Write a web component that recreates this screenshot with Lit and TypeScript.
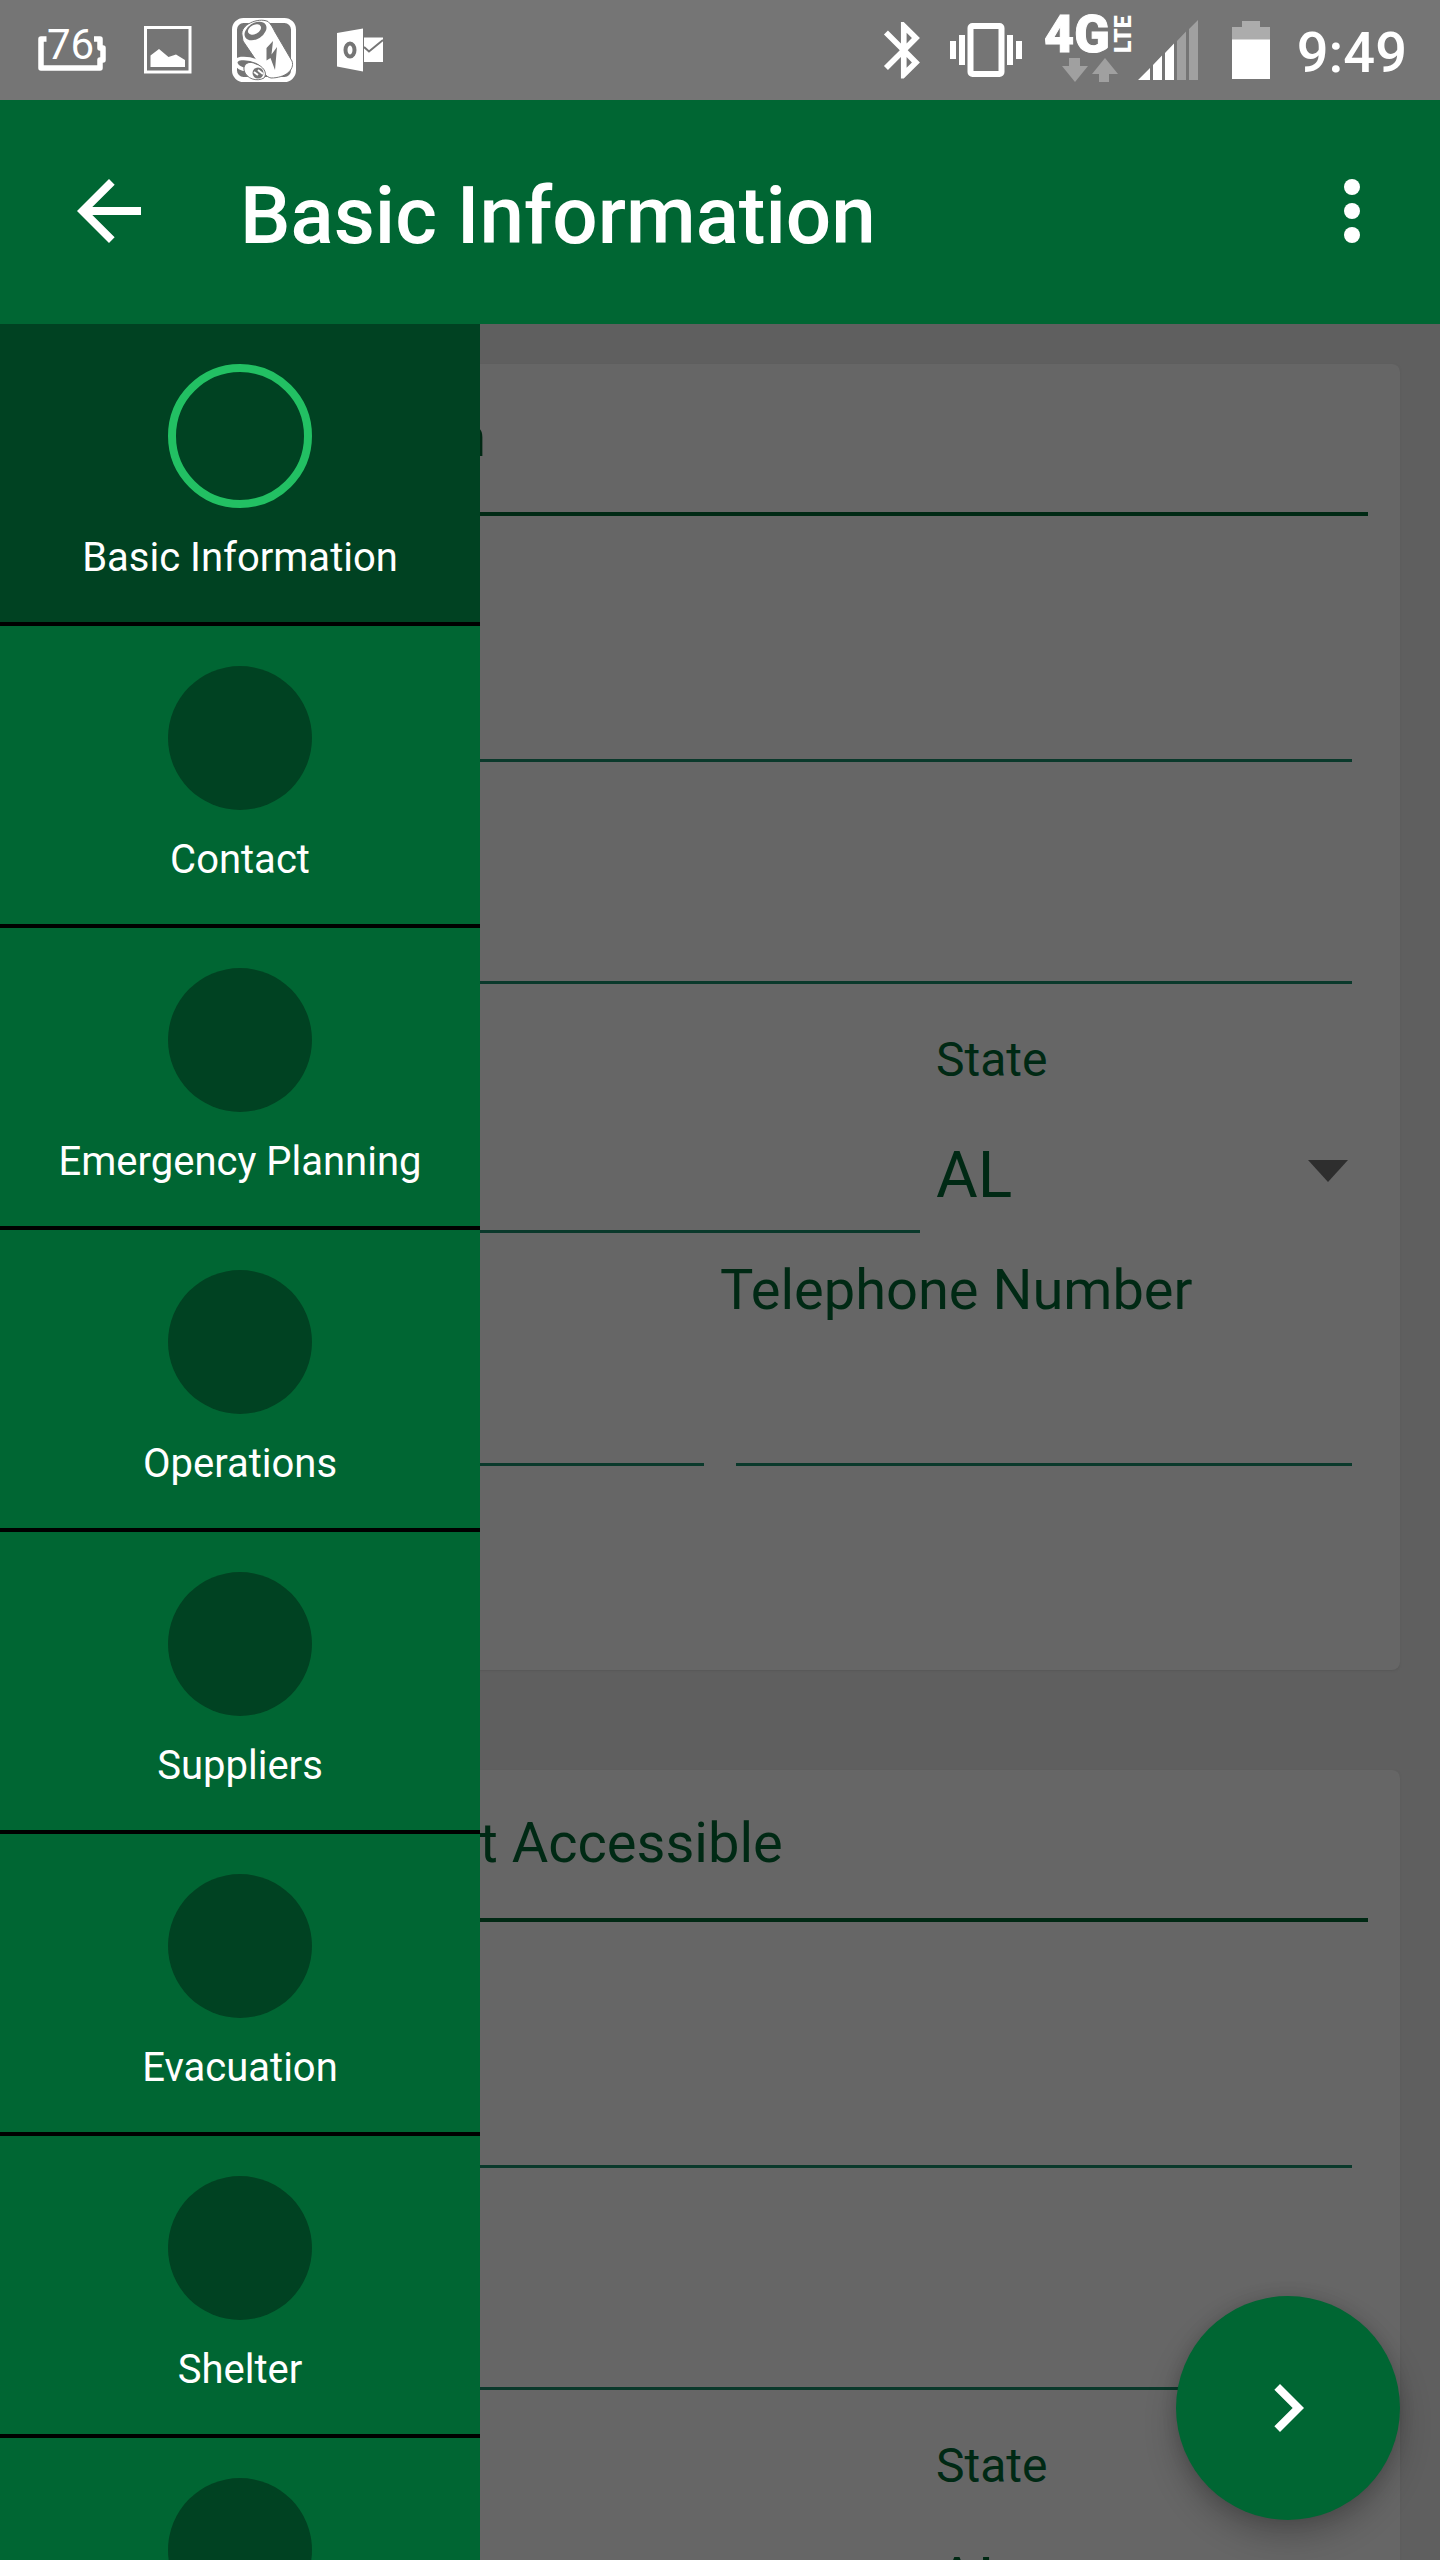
import { LitElement, html, css, svg } from "lit";
import { customElement, property, state } from "lit/decorators.js";
import { classMap } from "lit/directives/class-map.js";

@customElement("status-bar")
class StatusBar extends LitElement {
  static styles = css`
    :host {
      display: flex;
      justify-content: space-between;
      align-items: center;
      height: 100px;
      padding: 0 33px 0 36px;
      background: #757575;
      color: #fff;
    }
    .group {
      display: flex;
      align-items: center;
    }
    .notices {
      gap: 32px;
    }
    .system {
      gap: 20px;
    }
    svg {
      display: block;
      height: 100px;
      flex: none;
    }
    .dim {
      fill: #a0a0a0;
    }
    .level {
      font: 400 42px Roboto, sans-serif;
    }
    .network {
      font: 900 52px Roboto, sans-serif;
    }
    .network-small {
      font: 900 23px Roboto, sans-serif;
    }
    .time {
      font-size: 56px;
      line-height: 64px;
      font-weight: 500;
      padding-top: 6px;
    }
  `;

  render() {
    return html`
      <div class="group notices">
        <svg width="74" viewBox="36 0 74 100" aria-label="Battery level">
          <path d="M46.500 39H41V68H100V60H103V48H100V39H94" fill="none" stroke="#fff" stroke-width="5.500" stroke-linejoin="round" />
          <text class="level" x="47" y="59" fill="#fff">76</text>
        </svg>
        <svg width="58" viewBox="142 0 58 100" aria-hidden="true">
          <rect x="145.500" y="27.500" width="44.500" height="44.500" fill="none" stroke="#fff" stroke-width="3" />
          <path fill="#fff" d="M150.500 67V55.500L159 49L168.500 57L176 54.500L185 60V67Z" />
        </svg>
        <svg width="68" viewBox="232 0 68 100" aria-hidden="true">
          <rect x="234.500" y="20.500" width="59" height="59" rx="9" fill="none" stroke="#fff" stroke-width="5" />
          <path fill="#fff" stroke="#757575" stroke-width="1" d="M242 35C240 25 258 17 268 21.500C271 24 273 28 275 32L292 61C295 70 285 78 271 78C266 77 263 72 260 66L243 41Z" />
          <ellipse cx="255.500" cy="31" rx="12" ry="8" transform="rotate(-33 255.500 31)" fill="#757575" />
          <ellipse cx="254.500" cy="29.500" rx="7" ry="4.500" transform="rotate(-28 254.500 29.500)" fill="#fff" />
          <path fill="#757575" d="M273 41L266.500 48V60.500L270.500 58L275 70L277 47L271.500 54.500Z" />
          <path fill="none" stroke="#fff" stroke-width="3.500" d="M247 70C235 68 232 60 241 58.500C247 58 255 59 262 65" />
          <path fill="#fff" stroke="#757575" stroke-width="1" d="M244 70C243 64 249 60 256 64C263 66 268 73 264 78C257 82 246 79 244 70Z" />
          <circle cx="258" cy="73" r="5.500" fill="#757575" />
          <path stroke="#fff" stroke-width="2" fill="none" d="M254 72L258 75M258 70L263 74" />
        </svg>
        <svg width="52" viewBox="332 0 52 100" aria-hidden="true">
          <path fill="#fff" d="M337 33L363 28.500V71.500L337 66.500Z" />
          <ellipse cx="350" cy="50" rx="4.500" ry="6.500" fill="none" stroke="#757575" stroke-width="4" />
          <rect x="364" y="37.500" width="19" height="24.500" fill="#fff" />
          <path d="M364 47L369 51.500L383 40" fill="none" stroke="#757575" stroke-width="2" />
        </svg>
      </div>
      <div class="group system">
        <svg width="44" viewBox="880 0 44 100" aria-label="Bluetooth">
          <path
            fill="#fff"
            transform="translate(868.8 16.3) scale(2.83)"
            d="M17.710 7.710L12 2h-1v7.590L6.410 5 5 6.410 10.590 12 5 17.590 6.410 19 11 14.410V22h1l5.710-5.710-4.300-4.290 4.300-4.290zM13 5.830l1.880 1.880L13 9.590V5.830zm1.880 10.460L13 18.170v-3.760l1.880 1.880z"
          />
        </svg>
        <svg width="78" viewBox="944 0 78 100" aria-label="Vibrate">
          <rect x="969.500" y="26" width="31" height="48" rx="2" fill="none" stroke="#fff" stroke-width="6" />
          <path fill="#fff" d="M949 41h6v18h-6zM958 35h6v30h-6zM1006 35h6v30h-6zM1015 41h6v18h-6z" />
        </svg>
        <svg width="158" viewBox="1042 0 158 100" aria-label="4G LTE signal">
          <text class="network" x="1043" y="52" fill="#fff" stroke="#fff" stroke-width="1">4G</text>
          <text class="network-small" transform="translate(1130 53) rotate(-90)" fill="#fff">LTE</text>
          <path class="dim" d="M1068 58h11v8h8L1074 82L1061 66h7zM1104 58L1117 74h-9v8h-10v-8h-7z" />
          <path fill="#fff" d="M1137 80L1149 68V80ZM1152 80V65L1161 55.500V80ZM1164 80V53L1173 43.500V80Z" />
          <path class="dim" d="M1176 80V41L1185 31.500V80ZM1188 80V29L1197 20V80Z" />
        </svg>
        <svg width="56" viewBox="1220 0 56 100" aria-label="Battery">
          <path fill="#acacac" d="M1231 27h10v-6h18v6h10v13h-38z" />
          <rect x="1231" y="39.500" width="38" height="39.500" fill="#fff" />
        </svg>
        <time class="time">9:49</time>
      </div>
    `;
  }
}

@customElement("section-item")
class SectionItem extends LitElement {
  @property() label = "";
  @property({ type: Boolean }) active = false;

  static styles = css`
    :host {
      display: block;
      border-bottom: 4px solid #000;
    }
    .item {
      display: flex;
      flex-direction: column;
      align-items: center;
      gap: 24px;
      box-sizing: border-box;
      width: 100%;
      min-height: 298px;
      padding: 40px 8px 0;
      border: 0;
      background: #006633;
      color: #fff;
      font: 400 40px/52px Roboto, sans-serif;
      cursor: pointer;
    }
    .item.active {
      background: #004222;
    }
    .dot {
      box-sizing: border-box;
      width: 144px;
      height: 144px;
      border-radius: 50%;
      background: #004222;
    }
    .active .dot {
      border: 8px solid #22c063;
    }
  `;

  render() {
    return html`
      <button class=${classMap({ item: true, active: this.active })} type="button">
        <span class="dot"></span>
        <span>${this.label}</span>
      </button>
    `;
  }
}

@customElement("location-card")
class LocationCard extends LitElement {
  @property() heading = "";

  static styles = css`
    :host {
      display: block;
      flex: none;
      box-sizing: border-box;
      padding: 0 32px 204px;
      border-radius: 8px;
      background: #666;
      box-shadow: 0 1px 2px #585858;
      color: #002914;
    }
    h2 {
      margin: 0 0 24px;
      padding-bottom: 2px;
      border-bottom: 4px solid #002914;
      font-size: 56px;
      line-height: 146px;
      font-weight: 400;
      white-space: nowrap;
    }
    .field {
      display: flex;
      flex-direction: column;
      justify-content: flex-end;
      box-sizing: border-box;
      min-height: 222px;
    }
    label {
      font-size: 56px;
      line-height: 64px;
    }
    input {
      box-sizing: border-box;
      height: 134px;
      min-width: 0;
      margin: 0 16px;
      padding: 0;
      border: 0;
      border-bottom: 3px solid #0a392b;
      border-radius: 0;
      background: none;
      color: inherit;
      font: 400 64px Roboto, sans-serif;
      outline: none;
    }
    .place {
      display: grid;
      grid-template-columns: minmax(0, 2fr) minmax(0, 1fr);
    }
    .state {
      display: flex;
      flex-direction: column;
      gap: 48px;
      padding: 48px 0 17px;
    }
    .state label {
      font-size: 48px;
      line-height: 56px;
    }
    .picker {
      display: grid;
      align-items: center;
    }
    .picker > * {
      grid-area: 1 / 1;
    }
    select {
      appearance: none;
      width: 100%;
      height: 80px;
      margin: 0;
      padding: 0;
      border: 0;
      background: none;
      color: inherit;
      font: 400 64px/80px Roboto, sans-serif;
    }
    .arrow {
      justify-self: end;
      width: 40px;
      height: 24px;
      margin: 0 20px 8px 0;
      pointer-events: none;
      fill: #2e2e2e;
    }
    .contact {
      display: grid;
      grid-template-columns: minmax(0, 1fr) minmax(0, 1fr);
    }
    .contact .field {
      gap: 10px;
      padding-top: 25px;
    }
  `;

  render() {
    return html`
      <h2>${this.heading}</h2>
      <div class="field">
        <input type="text" aria-label="Name" />
      </div>
      <div class="field">
        <input type="text" aria-label="Address" />
      </div>
      <div class="place">
        <div class="field">
          <input type="text" aria-label="City" />
        </div>
        <div class="state">
          <label for="state">State</label>
          <div class="picker">
            <select id="state">
              <option>AL</option>
              <option>AK</option>
              <option>AZ</option>
            </select>
            <svg class="arrow" viewBox="0 0 40 24"><path d="M0 0H40L20 22Z" /></svg>
          </div>
        </div>
      </div>
      <div class="contact">
        <div class="field">
          <input type="text" aria-label="Zip Code" />
        </div>
        <div class="field">
          <label for="phone">Telephone Number</label>
          <input id="phone" type="tel" />
        </div>
      </div>
    `;
  }
}

@customElement("app-root")
class AppRoot extends LitElement {
  @state() private current = 0;

  private sections = [
    "Basic Information",
    "Contact",
    "Emergency Planning",
    "Operations",
    "Suppliers",
    "Evacuation",
    "Shelter",
    "",
  ];

  static styles = css`
    :host {
      display: flex;
      flex-direction: column;
      height: 100vh;
      overflow: hidden;
      background: #5f5f5f;
      font-family: Roboto, sans-serif;
    }
    status-bar {
      flex: none;
    }
    .app-bar {
      display: flex;
      align-items: center;
      flex: none;
      height: 224px;
      padding: 0 40px 2px 61px;
      box-sizing: border-box;
      background: #006633;
      color: #fff;
    }
    .app-bar h1 {
      flex: 1;
      margin: 0;
      padding: 10px 0 0 83px;
      font-size: 80px;
      line-height: 96px;
      font-weight: 500;
    }
    .icon-button {
      display: block;
      width: 96px;
      height: 96px;
      padding: 0;
      border: 0;
      background: none;
      color: inherit;
      cursor: pointer;
    }
    .icon-button svg {
      display: block;
      width: 96px;
      height: 96px;
      fill: currentColor;
    }
    .body {
      position: relative;
      flex: 1;
      min-height: 0;
      overflow: hidden;
    }
    main {
      display: flex;
      flex-direction: column;
      gap: 100px;
      height: 100%;
      box-sizing: border-box;
      padding: 40px;
      overflow: hidden;
    }
    nav {
      position: absolute;
      top: 0;
      bottom: 0;
      left: 0;
      width: 480px;
      overflow: hidden;
      background: #006633;
    }
    .next {
      position: absolute;
      right: 40px;
      bottom: 40px;
      display: grid;
      place-items: center;
      width: 224px;
      height: 224px;
      padding: 0;
      border: 0;
      border-radius: 50%;
      background: #006633;
      box-shadow: 0 16px 32px rgba(0, 0, 0, 0.24), 0 0 16px rgba(0, 0, 0, 0.12);
      cursor: pointer;
    }
    .next svg {
      width: 96px;
      height: 96px;
      fill: #fff;
    }
  `;

  render() {
    return html`
      <status-bar></status-bar>
      <header class="app-bar">
        <button class="icon-button" type="button" aria-label="Back">
          <svg viewBox="0 0 24 24">${svg`<path d="M20 11H7.830l5.590-5.590L12 4l-8 8 8 8 1.410-1.410L7.830 13H20v-2z" />`}</svg>
        </button>
        <h1>Basic Information</h1>
        <button class="icon-button" type="button" aria-label="More options">
          <svg viewBox="0 0 24 24">
            <circle cx="12" cy="6" r="2" />
            <circle cx="12" cy="12" r="2" />
            <circle cx="12" cy="18" r="2" />
          </svg>
        </button>
      </header>
      <div class="body">
        <main>
          <location-card heading="Current Location"></location-card>
          <location-card heading="If Location is Not Accessible"></location-card>
        </main>
        <nav aria-label="Sections">
          ${this.sections.map(
            (name, i) => html`
              <section-item
                .label=${name}
                .active=${i === this.current}
                @click=${() => (this.current = i)}
              ></section-item>
            `
          )}
        </nav>
        <button class="next" type="button" aria-label="Next">
          <svg viewBox="0 0 24 24"><path d="M10 6L8.590 7.410L13.170 12L8.590 16.590L10 18L16 12Z" /></svg>
        </button>
      </div>
    `;
  }
}
